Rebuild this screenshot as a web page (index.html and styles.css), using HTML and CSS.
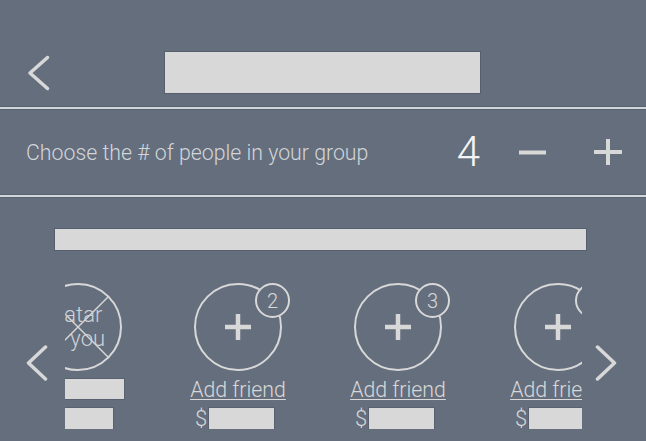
FILE: index.html
```html
<!DOCTYPE html>
<html lang="en">
<head>
<meta charset="utf-8">
<title>Group</title>
<link rel="stylesheet" href="styles.css">
</head>
<body>
<div class="screen">
  <header class="topbar">
    <svg class="back" viewBox="0 0 24 36" width="24" height="36"><polyline points="20.5,2.5 3,18 20.5,33.5" /></svg>
    <div class="title-ph"></div>
  </header>
  <div class="divider"></div>
  <div class="group-row">
    <span class="group-label">Choose the # of people in your group</span>
    <span class="count">4</span>
    <svg class="minus" viewBox="0 0 27 27" width="27" height="27"><line x1="0" y1="13.5" x2="27" y2="13.5" /></svg>
    <svg class="plus" viewBox="0 0 28 28" width="28" height="28"><line x1="0" y1="14" x2="28" y2="14" /><line x1="14" y1="1" x2="14" y2="27" /></svg>
  </div>
  <div class="divider"></div>
  <section class="people">
    <div class="subtitle-ph"></div>
    <div class="carousel">
      <svg class="nav-chevron" viewBox="0 0 22 36" width="22" height="36"><polyline points="19.5,2 2.5,18 19.5,34" /></svg>
      <div class="viewport">
        <div class="track">
          <div class="person">
            <div class="avatar">
              <svg class="cross" viewBox="0 0 84 84" width="84" height="84"><line x1="11" y1="11" x2="73" y2="73" /><line x1="73" y1="11" x2="11" y2="73" /></svg>
              <span class="avatar-text">Avatar<br>for you</span>
            </div>
            <div class="ph ph-name"></div>
            <div class="ph ph-amount"></div>
          </div>
          <div class="person">
            <div class="avatar">
              <svg class="add-icon" viewBox="0 0 28 28" width="28" height="28"><line x1="1" y1="14" x2="27" y2="14" /><line x1="14" y1="1" x2="14" y2="27" /></svg>
              <span class="badge">2</span>
            </div>
            <span class="add-link">Add friend</span>
            <div class="amount"><span class="dollar">$</span><span class="ph price-ph"></span></div>
          </div>
          <div class="person">
            <div class="avatar">
              <svg class="add-icon" viewBox="0 0 28 28" width="28" height="28"><line x1="1" y1="14" x2="27" y2="14" /><line x1="14" y1="1" x2="14" y2="27" /></svg>
              <span class="badge">3</span>
            </div>
            <span class="add-link">Add friend</span>
            <div class="amount"><span class="dollar">$</span><span class="ph price-ph"></span></div>
          </div>
          <div class="person">
            <div class="avatar">
              <svg class="add-icon" viewBox="0 0 28 28" width="28" height="28"><line x1="1" y1="14" x2="27" y2="14" /><line x1="14" y1="1" x2="14" y2="27" /></svg>
              <span class="badge">4</span>
            </div>
            <span class="add-link">Add friend</span>
            <div class="amount"><span class="dollar">$</span><span class="ph price-ph"></span></div>
          </div>
        </div>
      </div>
      <svg class="nav-chevron" viewBox="0 0 22 36" width="22" height="36"><polyline points="2.5,2 19.5,18 2.5,34" /></svg>
    </div>
  </section>
</div>
</body>
</html>
```
FILE: styles.css
```css
html, body {
  margin: 0;
  padding: 0;
}

body {
  background: #646e7d;
  font-family: Roboto, "Liberation Sans", sans-serif;
  font-weight: 300;
  color: #d8d8d8;
}

.screen {
  width: 646px;
  height: 441px;
  overflow: hidden;
}

/* top bar */
.topbar {
  display: flex;
  align-items: center;
  height: 107px;
  box-sizing: border-box;
  padding: 38px 0 0 27px;
}

.back {
  flex: none;
  fill: none;
  stroke: #d8d8d8;
  stroke-width: 3.5;
  stroke-linecap: round;
  stroke-linejoin: round;
}

.title-ph {
  width: 315px;
  height: 41px;
  margin-left: 114px;
  background: #d8d8d8;
  box-shadow: 0 0 0 1px rgba(60, 68, 80, 0.35);
}

.divider {
  height: 2px;
  background: #d2d5d9;
  box-shadow: 0 -1px 0 rgba(70, 78, 90, 0.4), 0 1px 0 rgba(70, 78, 90, 0.4);
}

/* group size row */
.group-row {
  display: flex;
  align-items: center;
  height: 86px;
  padding-left: 26px;
}

.group-label {
  font-size: 21.3px;
  color: #d3d5d9;
  white-space: nowrap;
}

.count {
  margin-left: auto;
  font-size: 42px;
  font-weight: 300;
  line-height: 1;
  color: #f4f4f4;
}

.minus,
.plus {
  flex: none;
  stroke: #d8d8d8;
  stroke-width: 4;
}

.minus {
  margin-left: 39px;
}

.plus {
  margin-left: 48px;
  margin-right: 24px;
}

/* people carousel */
.people {
  padding-top: 32px;
}

.subtitle-ph {
  width: 531px;
  height: 21px;
  margin-left: 55px;
  background: #d8d8d8;
  box-shadow: 0 0 0 1px rgba(60, 68, 80, 0.35);
}

.carousel {
  display: flex;
  align-items: flex-start;
  margin-top: 33px;
  padding-left: 26px;
}

.nav-chevron {
  flex: none;
  margin-top: 62px;
  fill: none;
  stroke: #d8d8d8;
  stroke-width: 3.5;
  stroke-linecap: round;
  stroke-linejoin: round;
}

.viewport {
  flex: none;
  width: 517px;
  margin-left: 17px;
  margin-right: 13px;
  overflow: hidden;
}

.track {
  display: flex;
  margin-left: -67px;
}

.person {
  flex: 0 0 160px;
  display: flex;
  flex-direction: column;
  align-items: center;
}

.avatar {
  position: relative;
  width: 88px;
  height: 88px;
  box-sizing: border-box;
  border: 2px solid #d8d8d8;
  border-radius: 50%;
  display: flex;
  align-items: center;
  justify-content: center;
}

.cross {
  position: absolute;
  left: 0;
  top: 0;
  stroke: #d8d8d8;
  stroke-width: 1.5;
}

.avatar-text {
  position: relative;
  padding-right: 13px;
  font-size: 22px;
  line-height: 24px;
  text-align: center;
  color: #cfd2d6;
  white-space: nowrap;
}

.add-icon {
  stroke: #d8d8d8;
  stroke-width: 4.5;
}

.badge {
  position: absolute;
  top: -2px;
  left: 59px;
  width: 35px;
  height: 35px;
  box-sizing: border-box;
  border: 2px solid #d8d8d8;
  border-radius: 50%;
  background: #646e7d;
  display: flex;
  align-items: center;
  justify-content: center;
  font-size: 20px;
  line-height: 1;
}

.add-link {
  margin-top: 7px;
  font-size: 21.3px;
  line-height: 24px;
  white-space: nowrap;
  text-decoration: underline;
  text-decoration-thickness: 1px;
  text-underline-offset: 2px;
  cursor: pointer;
}

.amount {
  display: flex;
  align-items: center;
  height: 21px;
  margin-top: 6px;
  margin-right: 7px;
}

.dollar {
  font-size: 22px;
  line-height: 21px;
  margin-right: 2px;
}

.ph {
  display: block;
  background: #d8d8d8;
  box-shadow: 0 0 0 1px rgba(60, 68, 80, 0.3);
}

.ph-name {
  width: 92px;
  height: 20px;
  margin-top: 8px;
}

.ph-amount {
  width: 70px;
  height: 21px;
  margin-top: 9px;
}

.price-ph {
  width: 65px;
  height: 21px;
}
```
